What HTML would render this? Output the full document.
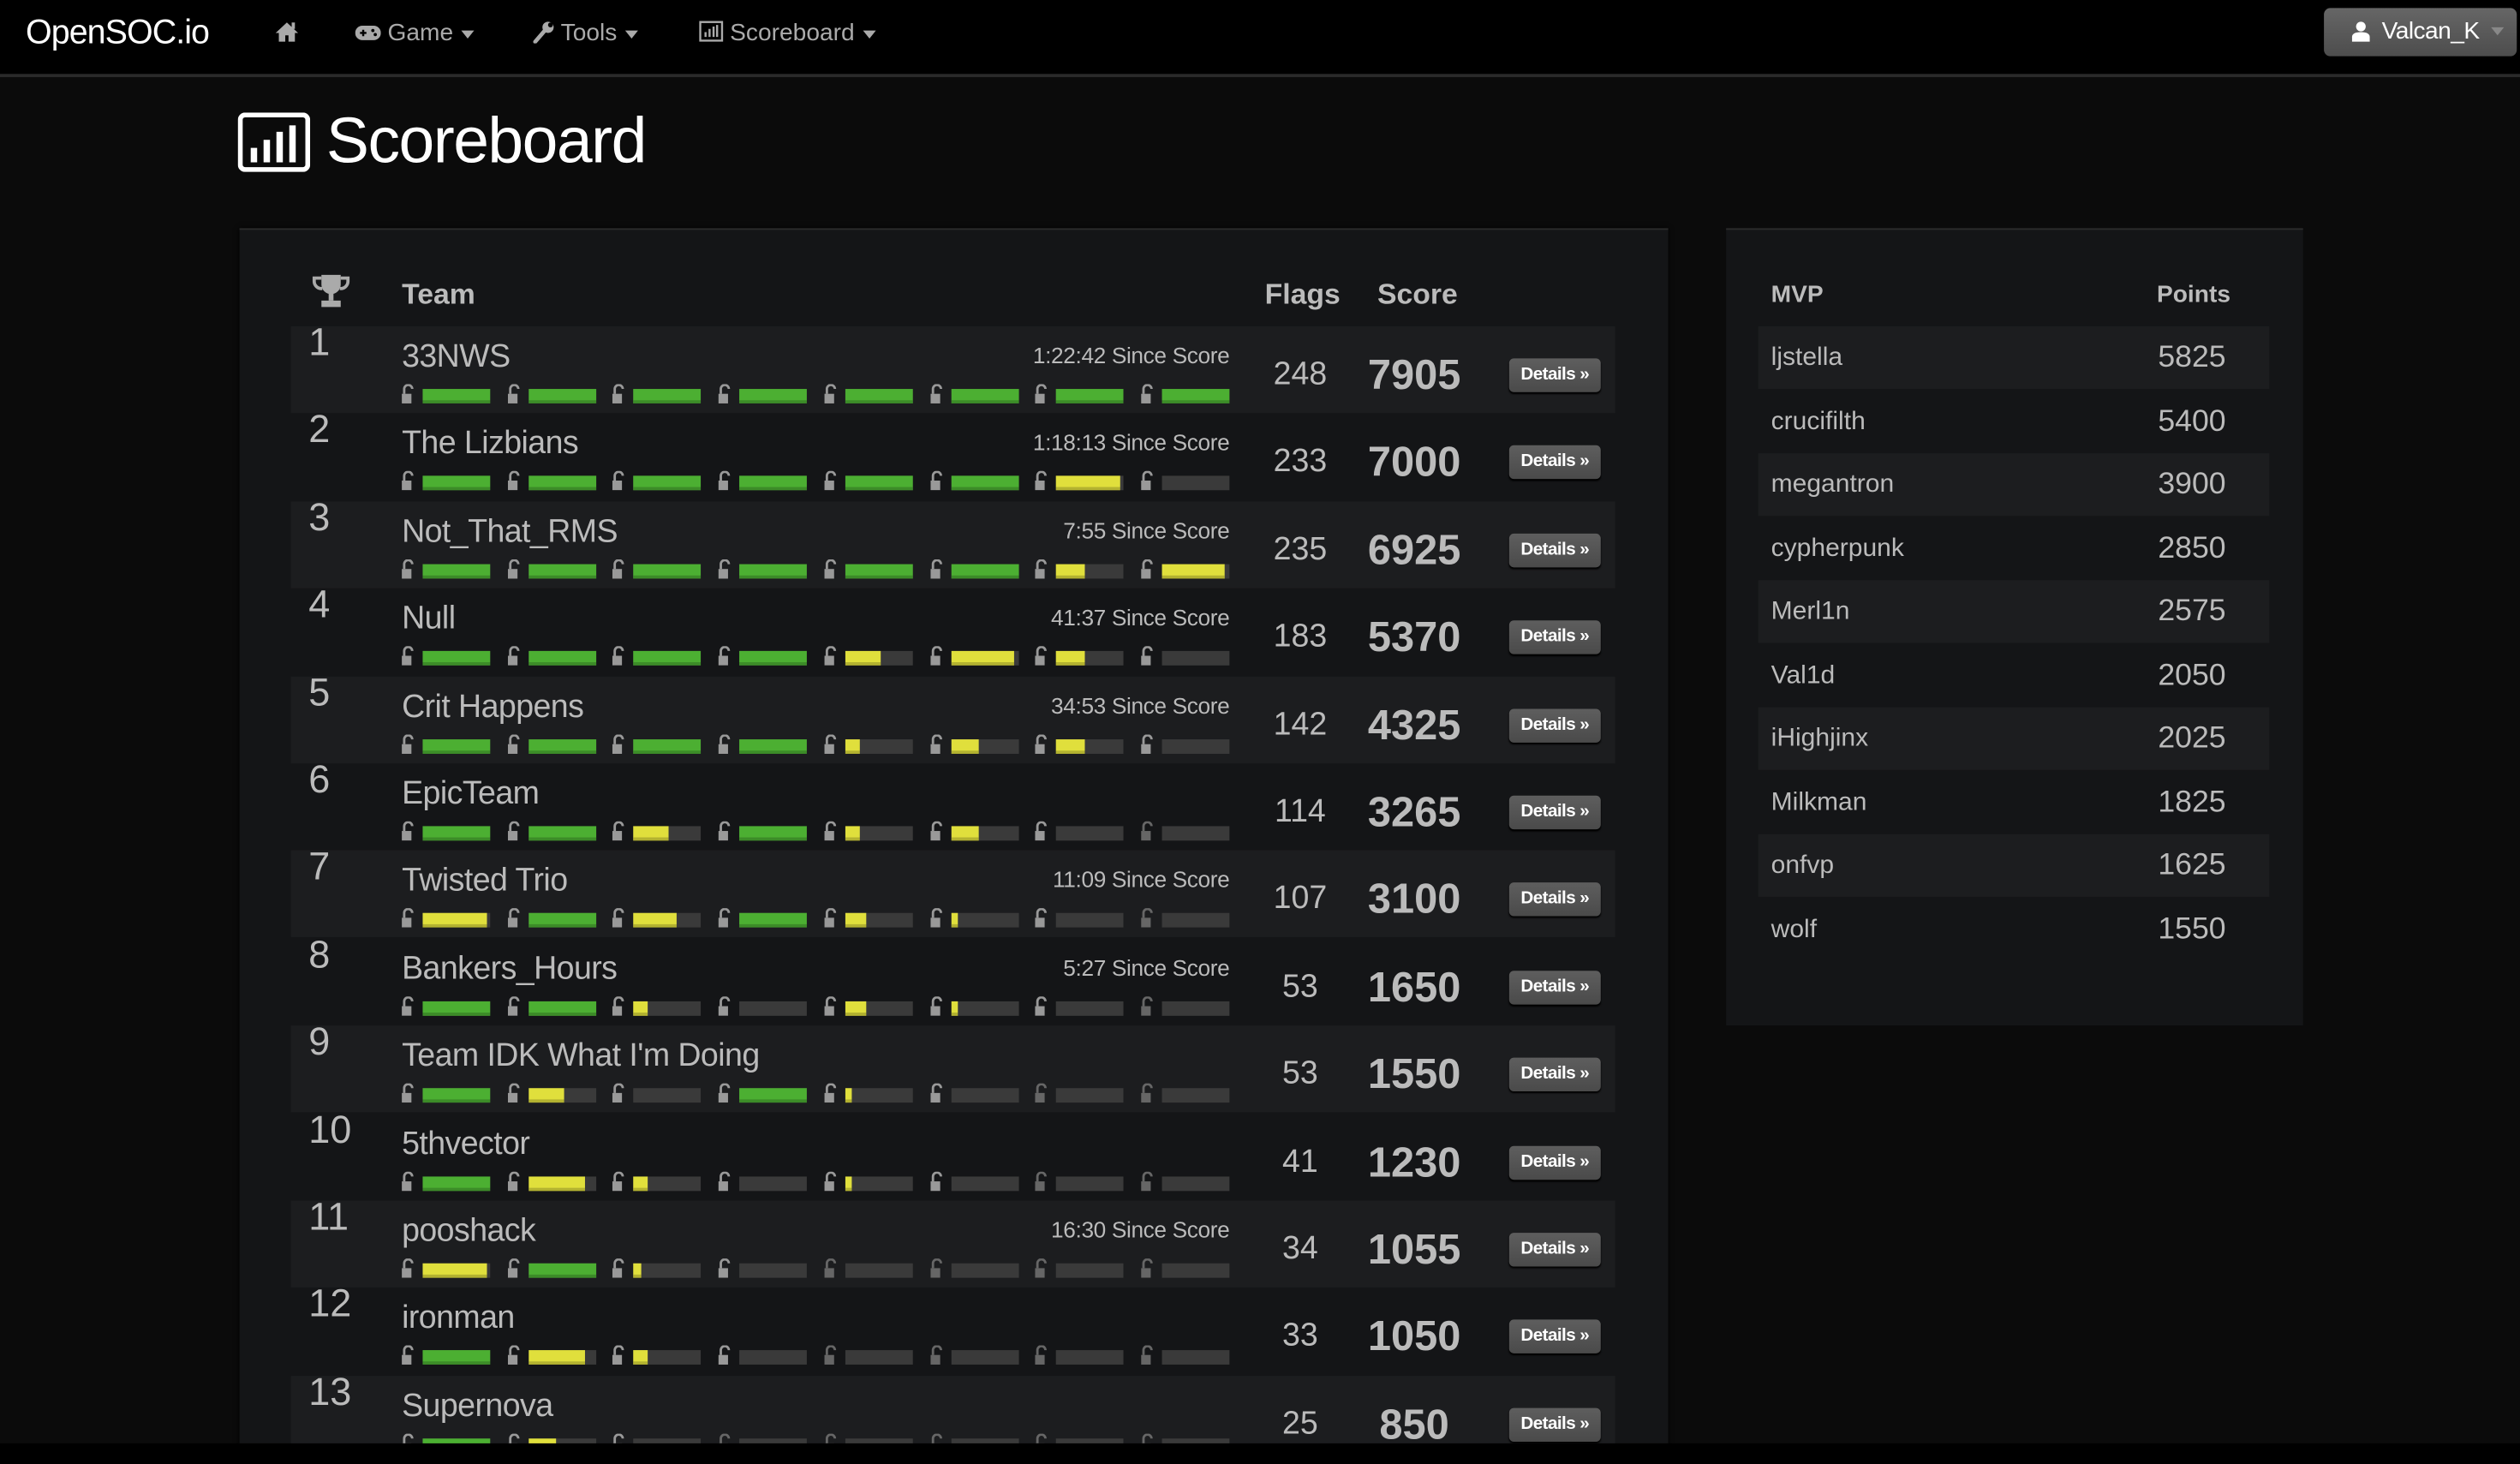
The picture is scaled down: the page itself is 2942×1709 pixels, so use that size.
<!DOCTYPE html>
<html><head><meta charset="utf-8">
<style>
html,body{margin:0;padding:0;background:#0b0b0b;overflow:hidden;width:2942px;height:1708px}
#w{position:absolute;left:0;top:0;width:1568px;height:911px;transform:scale(1.87628);transform-origin:0 0;font-family:"Liberation Sans",sans-serif;color:#bbb;overflow:hidden;background:#0b0b0b}
.nav{position:absolute;left:0;top:0;width:1568px;height:46px;background:#000;border-bottom:2px solid #2a2a2a}
.nav .b{position:absolute;left:16px;top:9px;font-size:21px;color:#fff;letter-spacing:-0.5px}
.nav .i{position:absolute;top:12px;font-size:15px;color:#aaa}
.car{display:inline-block;width:0;height:0;border-left:4px solid transparent;border-right:4px solid transparent;border-top:5px solid #aaa;vertical-align:middle;margin-left:5px}
.user{position:absolute;left:1446px;top:5px;width:120px;height:30px;background:linear-gradient(#666,#4d4d4d);border-radius:4px;color:#fff;font-size:15px;line-height:30px}
.title{position:absolute;left:203px;top:66px;font-size:40px;color:#fff;letter-spacing:-0.8px}
.panel{position:absolute;left:149px;top:142px;width:889px;height:800px;background:#141517;border-top:1px solid #2c2c2c;box-shadow:0 0 3px #000}
.mvp{position:absolute;left:1074px;top:142px;width:359px;height:495px;background:#141517;border-top:1px solid #2c2c2c}
.h{position:absolute;font-weight:bold;font-size:18px;color:#bbb}
.row{position:absolute;left:32px;width:824px;height:54px}
.row.o{background:#1c1d1f}
.rk{position:absolute;left:11px;top:-3px;font-size:24px;color:#bbb}
.tn{position:absolute;left:69px;top:8px;font-size:20px;color:#bbb;letter-spacing:-0.3px}
.ss{position:absolute;right:240px;top:10px;font-size:14px;color:#bbb;letter-spacing:-0.2px}
.fl{position:absolute;left:600px;width:56px;text-align:center;top:19px;font-size:20px;color:#bbb}
.sc{position:absolute;left:660px;width:78px;text-align:center;top:15px;font-size:26px;font-weight:bold;color:#bbb}
.dt{position:absolute;left:758px;top:20px;width:57px;height:21px;background:linear-gradient(#5e5e5e,#4a4a4a);border-radius:3px;color:#fff;font-size:11px;font-weight:bold;line-height:21px;text-align:center;box-shadow:0 1px 1px #000;letter-spacing:-0.3px}
.seg{position:absolute;top:36px;height:12px}
.lk{position:absolute;left:0;top:0;width:8px;height:12px}
.bar{position:absolute;left:13px;top:3px;width:42px;height:9px;background:#3a3a3a}
.bar i{position:absolute;left:0;top:0;height:9px;box-shadow:inset 0 -2px 0 rgba(0,0,0,.2)}
.mr{position:absolute;left:20px;width:318px;height:39px;font-size:16px;color:#bbb}
.mr.o{background:#1c1d1f}
.mr span{position:absolute;top:11px}
</style></head><body><div id="w">
<div class="nav">
<div class="b">OpenSOC.io</div>
<div class="i" style="left:171px;top:13px"><svg width="15" height="13" viewBox="0 0 15 13"><path d="M7.5 1L0.5 7.5h2V13h4V9h2v4h4V7.5h2z" fill="#aaa"/><rect x="10.5" y="1" width="2" height="4" fill="#aaa"/></svg></div>
<div class="i" style="left:221px"><svg width="16" height="11" viewBox="0 0 16 11" style="vertical-align:-1px"><rect x="0" y="1" width="16" height="9" rx="4.5" fill="#aaa"/><path d="M3 5.5h4M5 3.5v4" stroke="#000" stroke-width="1.3"/><circle cx="11" cy="4" r="1" fill="#000"/><circle cx="12.5" cy="6.5" r="1" fill="#000"/></svg> Game<span class="car"></span></div>
<div class="i" style="left:331px"><svg width="14" height="14" viewBox="0 0 14 14" style="vertical-align:-2px"><path d="M2 13L8 6" stroke="#aaa" stroke-width="2.5" stroke-linecap="round"/><circle cx="10" cy="4" r="3.5" fill="#aaa"/><circle cx="11.5" cy="2.5" r="1.5" fill="#000"/></svg> Tools<span class="car"></span></div>
<div class="i" style="left:435px"><svg width="15" height="13" viewBox="0 0 15 13" style="vertical-align:-1px"><rect x="0.7" y="0.7" width="13.6" height="11.6" fill="none" stroke="#aaa" stroke-width="1.3"/><path d="M4 10V7M6.5 10V5M9 10V3.5M11.2 10V2.5" stroke="#aaa" stroke-width="1.3"/></svg> Scoreboard<span class="car"></span></div>
<div class="user"><svg width="12" height="13" viewBox="0 0 12 13" style="position:absolute;left:17px;top:8px"><circle cx="6" cy="3.5" r="3" fill="#fff"/><path d="M0.5 13v-3c0-2 2-3 5.5-3s5.5 1 5.5 3v3z" fill="#fff"/></svg><span style="position:absolute;left:36px;letter-spacing:-0.3px">Valcan_K</span><span class="car" style="position:absolute;left:99px;top:12px;border-top-color:#888"></span></div>
</div>
<svg width="45" height="37" viewBox="0 0 45 37" style="position:absolute;left:148px;top:70px"><rect x="1.5" y="1.5" width="42" height="34" rx="3" fill="none" stroke="#fff" stroke-width="3"/><rect x="8" y="22" width="4" height="9" fill="#fff"/><rect x="16" y="17" width="4" height="14" fill="#fff"/><rect x="24" y="12" width="4" height="19" fill="#fff"/><rect x="32" y="8" width="4" height="23" fill="#fff"/></svg>
<div class="title">Scoreboard</div>
<div class="panel" id="p">
<svg width="24" height="22" viewBox="0 0 24 22" style="position:absolute;left:45px;top:27px"><path d="M6 1h12v6a6 6 0 0 1-12 0z" fill="#aaa"/><path d="M6 3H1.5v2a4.5 4.5 0 0 0 5 4.5M18 3h4.5v2a4.5 4.5 0 0 1-5 4.5" fill="none" stroke="#aaa" stroke-width="2"/><rect x="10.5" y="12" width="3" height="5" fill="#aaa"/><rect x="6" y="17" width="12" height="4" fill="#aaa"/></svg>
<div class="h" style="left:101px;top:30px">Team</div>
<div class="h" style="left:638px;top:30px">Flags</div>
<div class="h" style="left:708px;top:30px">Score</div>
</div>
<div class="mvp" id="m">
<div class="h" style="left:28px;top:32px;font-size:15px">MVP</div>
<div class="h" style="left:268px;top:32px;font-size:15px">Points</div>
</div>
<div style="position:absolute;left:0;top:898px;width:1568px;height:13px;background:#000"></div>
</div>
<script>
var T=[["33NWS","1:22:42",248,7905,"GGGGGGGG"],["The Lizbians","1:18:13",233,7000,"GGGGGG9E"],["Not_That_RMS","7:55",235,6925,"GGGGGG49"],["Null","41:37",183,5370,"GGGG594E"],["Crit Happens","34:53",142,4325,"GGGG244E"],["EpicTeam","",114,3265,"GG5G24EE"],["Twisted Trio","11:09",107,3100,"9G6G31EE"],["Bankers_Hours","5:27",53,1650,"GG2E31EE"],["Team IDK What I'm Doing","",53,1550,"G5EG1EEE"],["5thvector","",41,1230,"G82E1EEE"],["pooshack","16:30",34,1055,"9G1EEEEE"],["ironman","",33,1050,"G82EEEEE"],["Supernova","",25,850,"G4EEEEEE"]];
var p=document.getElementById('p'),h='';
T.forEach(function(t,i){
h+='<div class="row'+(i%2?'':' o')+'" style="top:'+(60+i*54.4)+'px"><div class="rk">'+(i+1)+'</div><div class="tn">'+t[0]+'</div>'+(t[1]?'<div class="ss">'+t[1]+' Since Score</div>':'')+'<div class="fl">'+t[2]+'</div><div class="sc">'+t[3]+'</div><div class="dt">Details &raquo;</div>';
for(var k=0;k<8;k++){var c=t[4][k],f='';
if(c=='G')f='<i style="width:42px;background:#4caf32"></i>';else if(c!='E')f='<i style="width:'+(+c*4.4)+'px;background:#e0df3c"></i>';
var lc=(c=='E'&&k>0&&t[4][k-1]=='E')?'#666':'#999';
h+='<div class="seg" style="left:'+(69+k*65.7)+'px"><svg class="lk" viewBox="0 0 8 12"><path d="M1.5 6V3a2.5 2.5 0 0 1 5 0" fill="none" stroke="'+lc+'" stroke-width="1.5"/><rect x="0" y="6" width="6" height="6" fill="'+lc+'"/></svg><div class="bar">'+f+'</div></div>';}
h+='</div>';});
p.insertAdjacentHTML('beforeend',h);
var M=[["ljstella",5825],["crucifilth",5400],["megantron",3900],["cypherpunk",2850],["Merl1n",2575],["Val1d",2050],["iHighjinx",2025],["Milkman",1825],["onfvp",1625],["wolf",1550]],m='';
M.forEach(function(r,i){m+='<div class="mr'+(i%2?'':' o')+'" style="top:'+(60+i*39.5)+'px"><span style="left:8px">'+r[0]+'</span><span style="right:27px;font-size:19px;top:9px">'+r[1]+'</span></div>';});
document.getElementById('m').insertAdjacentHTML('beforeend',m);
</script>
</body></html>
